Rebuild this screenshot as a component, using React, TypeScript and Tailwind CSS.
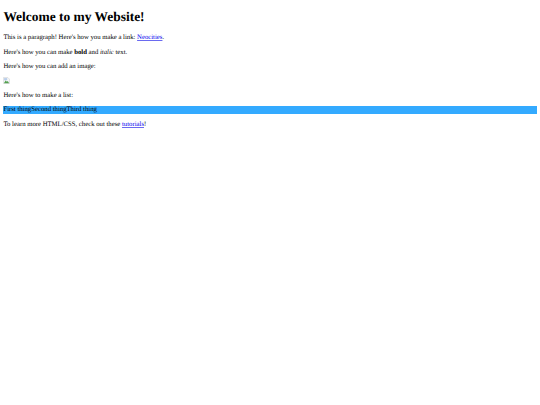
export default function App() {
  return (
    <div className="flow-root min-h-[405px] bg-white px-[3.4px] font-['Liberation_Serif',serif] text-[6.72px] leading-[7.7px] text-black [text-rendering:geometricPrecision]">
      <h1 className="mt-[9px] mb-[9.7px] text-[13.44px] leading-[15.5px] font-bold">Welcome to my Website!</h1>
      <p className="my-[6.72px]">
        This is a paragraph! Here's how you make a link:{' '}
        <a href="#" className="text-[#0000ee] underline decoration-[#6a6af0]">Neocities</a>.
      </p>
      <p className="my-[6.72px]">
        Here's how you can make <strong className="font-bold">bold</strong> and <em>italic</em> text.
      </p>
      <p className="my-[6.72px]">Here's how you can add an image:</p>
      <p className="my-[6.72px] h-[7.7px]">
        <svg width="7" height="7" viewBox="0 0 16 16" className="block">
          <path d="M1 1h10l4 4v10H1z" fill="#f4f6f8" stroke="#c4c4c4" strokeWidth="1" />
          <path d="M2.5 2.5h7v5h-7z" fill="#b9cdea" />
          <path d="M2 14l4-6 3 3 2-2 3 5z" fill="#55a04f" />
        </svg>
      </p>
      <p className="my-[6.72px]">Here's how to make a list:</p>
      <ul className="my-[6.72px] bg-[#33aaff]">
        <li className="inline">First thing</li>
        <li className="inline">Second thing</li>
        <li className="inline">Third thing</li>
      </ul>
      <p className="my-[6.72px]">
        To learn more HTML/CSS, check out these{' '}
        <a href="#" className="text-[#0000ee] underline decoration-[#6a6af0]">tutorials</a>!
      </p>
    </div>
  )
}
